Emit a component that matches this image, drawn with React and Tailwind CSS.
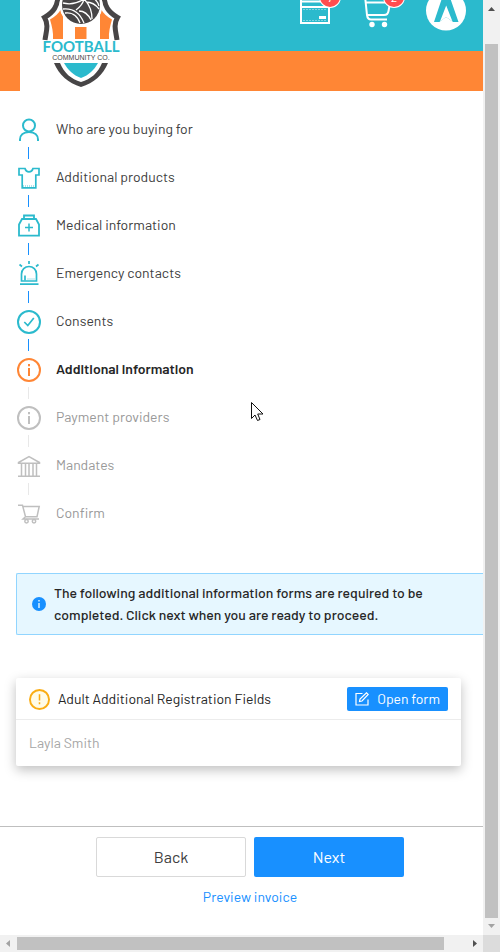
import React from 'react';

function PersonIcon() {
  return (
    <svg viewBox="0 0 24 24" className="size-6" fill="none" stroke="currentColor" strokeWidth="2">
      <circle cx="12" cy="7.500" r="6" />
      <path d="M3 23v-1.500c0-4 3-7.500 9-7.500s9 3.500 9 7.500V23" />
    </svg>
  );
}

function ShirtIcon() {
  return (
    <svg viewBox="0 0 24 24" className="size-6" fill="none" stroke="currentColor" strokeWidth="1.700">
      <path d="M2 2.500h6c.6 2.300 2.200 3.300 4 3.300s3.400-1 4-3.300h6v6.500h-3.200v12.800H5.200V9H2z" />
      <path d="M6 20h12" strokeWidth="0.800" strokeDasharray="1 1" />
    </svg>
  );
}

function MedicalIcon() {
  return (
    <svg viewBox="0 0 24 24" className="size-6" fill="none" stroke="currentColor" strokeWidth="1.800">
      <path d="M7 5V1.500h10V5" />
      <path d="M5 5h14l3 5.500v11.200H2V10.500z" />
      <path d="M12 9.500v8M8 13.500h8" strokeWidth="1.500" />
    </svg>
  );
}

function SirenIcon() {
  return (
    <svg viewBox="0 0 24 24" className="size-6 overflow-visible" fill="none" stroke="currentColor" strokeWidth="1.700">
      <path d="M12 -1v3M2.500 2.500l2.500 2M21.500 2.500l-2.500 2" />
      <path d="M4.500 19v-7a7.500 7.500 0 0 1 15 0v7z" />
      <path d="M8 18.500v-5M3 22.200h18.500" />
      <path d="M10.500 17h7" strokeWidth="0.800" strokeDasharray="1 1" />
    </svg>
  );
}

function CheckIcon() {
  return (
    <svg viewBox="0 0 24 24" className="size-6" fill="none" stroke="currentColor" strokeWidth="2">
      <circle cx="12" cy="12" r="11" />
      <path d="M7.300 12l3.500 3.500 6-7.500" strokeWidth="1.700" />
    </svg>
  );
}

function InfoIcon() {
  return (
    <svg viewBox="0 0 24 24" className="size-6" fill="none" stroke="currentColor" strokeWidth="2">
      <circle cx="12" cy="12" r="11" />
      <path d="M12 10v8M12 6v2.200" />
    </svg>
  );
}

function BankIcon() {
  return (
    <svg viewBox="0 0 24 24" className="size-6" fill="none" stroke="currentColor" strokeWidth="1.500">
      <path d="M1.500 9.200V8.500L12 2.700l10.500 5.800v.7zM1 22.200h22" />
      <path d="M4.500 10v12M8.500 10v12M12 10v12M16 10v12M19.500 10v12" />
    </svg>
  );
}

function CartIcon() {
  return (
    <svg viewBox="0 0 24 24" className="size-6" fill="none" stroke="currentColor" strokeWidth="1.500">
      <path d="M1 3.200h4.500l3 11.500h11.500L22.200 4.500H6M8.500 14.700L6 17h16" />
      <circle cx="9.500" cy="19.300" r="1.700" />
      <circle cx="17" cy="19.300" r="1.700" />
    </svg>
  );
}

const steps = [
  { label: 'Who are you buying for', Icon: PersonIcon, state: 'done' },
  { label: 'Additional products', Icon: ShirtIcon, state: 'done' },
  { label: 'Medical information', Icon: MedicalIcon, state: 'done' },
  { label: 'Emergency contacts', Icon: SirenIcon, state: 'done' },
  { label: 'Consents', Icon: CheckIcon, state: 'done' },
  { label: 'Additional information', Icon: InfoIcon, state: 'current' },
  { label: 'Payment providers', Icon: InfoIcon, state: 'waiting' },
  { label: 'Mandates', Icon: BankIcon, state: 'waiting' },
  { label: 'Confirm', Icon: CartIcon, state: 'waiting' },
];

const stepStyles = {
  done: { icon: 'text-[#2bbacd]', line: 'border-[#1890ff]', text: 'text-[#404040]' },
  current: { icon: 'text-[#ff8635]', line: 'border-[#e8e8e8]', text: 'font-semibold text-[#262626]' },
  waiting: { icon: 'text-[#bfbfbf]', line: 'border-[#e8e8e8]', text: 'text-[#999999]' },
};

function ClubLogo() {
  return (
    <svg viewBox="0 0 120 91" className="block w-full" role="img" aria-label="Football Community Co.">
      <path
        d="M38 -4C37.500 6 34 12 24.500 17.500 29 25 26 32 25 40M84 -4C84.500 6 88 12 97.500 17.500 93 25 96 32 97 40"
        fill="none"
        stroke="#474546"
        strokeWidth="5"
      />
      <path d="M41 9c-2 4-6 8-11 10.500 2 7 3.500 13 3 19.500h10V12z" fill="#ff8635" />
      <path d="M81 9c2 4 6 8 11 10.500-2 7-3.500 13-3 19.500H80V12z" fill="#ff8635" />
      <path d="M55 27h11.500v12H55z" fill="#ff8635" />
      <circle cx="61" cy="5" r="21.500" fill="#fff" />
      <circle cx="61" cy="5" r="19" fill="#474546" />
      <path
        d="M43 9c10-1 17 4 21 14M45 13c6-1 12 2 15 10M43 3c8 2 15 0 21-4M64 -1c-1 5-4 8-8 11M64 -1c5 5 8 11 8 20M59 11c5 0 9 3 12 9M66 2c5 0 10 3 13 7M70 -4c4 2 8 6 9 10"
        fill="none"
        stroke="#fff"
        strokeWidth="1.300"
      />
      <text x="61" y="52" textAnchor="middle" fontFamily="Lato, sans-serif" fontWeight="700" fontSize="15" fill="#2bbacd">
        FOOTBALL
      </text>
      <text x="61" y="60" textAnchor="middle" fontFamily="Liberation Sans, sans-serif" fontSize="7" fill="#474546">
        COMMUNITY CO.
      </text>
      <path d="M34 63h6c4 10 11 16 21 19 10-3 17-9 21-19h6C83 75 74 83 61 87 48 83 39 75 34 63z" fill="#474546" />
      <path d="M44 63h34c-4 7-9 12-17 15-8-3-13-8-17-15z" fill="#2bbacd" />
    </svg>
  );
}

function Badge({ children }) {
  return (
    <span className="absolute -top-[13px] left-5 flex h-5 w-5 items-center justify-center rounded-full bg-[#ff4d4f] text-xs text-white ring-1 ring-white">
      {children}
    </span>
  );
}

function Header() {
  return (
    <header className="relative overflow-hidden">
      <div className="flex h-[51px] items-start justify-end gap-[34px] bg-[#2bbacd] pr-[17px]">
        <button type="button" aria-label="Payments" className="relative">
          <svg viewBox="0 0 30 30" className="size-[30px]" fill="none" stroke="#fff" strokeWidth="2">
            <path d="M1 -4h28v27H1zM1 1.500h28M1 7h28" />
            <path d="M19 16h7v3h-7z" fill="#fff" stroke="none" />
            <path d="M3 9.500h24M3 20.500h24" strokeWidth="0.400" strokeDasharray="2 1" />
          </svg>
          <Badge>7</Badge>
        </button>
        <button type="button" aria-label="Basket" className="relative">
          <svg viewBox="0 0 28 30" className="h-[30px] w-7" fill="none" stroke="#fff" strokeWidth="2">
            <path d="M1 -4l2 19c.4 3 1.500 4.500 4 4.500h16M4 15h16c3 0 4-1 4.500-4L27 -2M2 2.500h20" />
            <circle cx="8" cy="24.500" r="2.700" fill="#fff" stroke="none" />
            <circle cx="20.500" cy="24.500" r="2.700" fill="#fff" stroke="none" />
          </svg>
          <Badge>2</Badge>
        </button>
        <button type="button" aria-label="Account">
          <svg viewBox="0 9 40 31" className="h-[31px] w-10">
            <circle cx="20" cy="19.500" r="20" fill="#fff" />
            <path d="M15.700 8h8.800l8 23h-5.300L20 26l-6.700 5H8z" fill="#2bbacd" />
            <path d="M20.200 14.500L26.500 30.500 20 26l-6 4.500z" fill="#fff" />
          </svg>
        </button>
      </div>
      <div className="h-10 bg-[#ff8635]" />
      <div className="absolute top-0 left-5 w-[120px] bg-white">
        <ClubLogo />
      </div>
    </header>
  );
}

function Steps() {
  return (
    <ol className="px-[17px] pt-[27px]">
      {steps.map(({ label, Icon, state }, i) => (
        <li key={label} className="flex h-12 gap-[15px]">
          <div className="flex w-6 flex-col gap-[5px]">
            <span className={stepStyles[state].icon}>
              <Icon />
            </span>
            {i < steps.length - 1 && <span className={`ml-[11px] h-3 border-l ${stepStyles[state].line}`} />}
          </div>
          <span className={`leading-[22px] ${stepStyles[state].text}`}>{label}</span>
        </li>
      ))}
    </ol>
  );
}

function FormCard() {
  return (
    <section className="mt-[43px] mr-[22px] ml-4 rounded-xs bg-white shadow-[0_4px_12px_rgba(0,0,0,0.25)]">
      <div className="flex items-center gap-2 border-b border-[#ececec] px-[13px] pt-[9px] pb-2">
        <svg viewBox="0 0 22 22" className="size-[21px] shrink-0" fill="#fffbe6" stroke="#faad14" strokeWidth="2">
          <circle cx="11" cy="11" r="10" />
          <path d="M11 5.500v6.500M11 14v2" strokeWidth="1.600" />
        </svg>
        <h2 className="flex-1 text-[#262626]">Adult Additional Registration Fields</h2>
        <button type="button" className="flex h-6 items-center gap-2 rounded-xs bg-[#1890ff] px-2 text-white">
          <svg viewBox="0 0 14 14" className="size-[14px]" fill="none" stroke="currentColor" strokeWidth="1.200">
            <path d="M7.500 1.500H1v11.500h12V7.500" />
            <path d="M4.500 9.500l.5-2.500L11.500 .8l1.700 1.700L7 9z" />
          </svg>
          Open form
        </button>
      </div>
      <p className="px-[13px] py-3 leading-[22px] text-[#a6a6a6]">Layla Smith</p>
    </section>
  );
}

export default function App() {
  return (
    <div className="grid min-h-screen grid-cols-[1fr_17px] grid-rows-[1fr_17px] bg-white font-['Barlow','Roboto',sans-serif] text-sm">
      <main className="relative flex min-w-0 flex-col">
        <Header />
        <Steps />
        <div className="mt-[23px] ml-4 flex items-center gap-2 rounded-l-xs border-y border-l border-[#91d5ff] bg-[#e6f7ff] py-2 pr-8 pl-[15px]">
          <svg viewBox="0 0 14 14" className="size-[14px] shrink-0">
            <circle cx="7" cy="7" r="7" fill="#1890ff" />
            <path d="M7 6v5M7 3v1.600" stroke="#e6f7ff" strokeWidth="1.400" />
          </svg>
          <p className="leading-[22px] font-medium text-[#262626]">
            The following additional information forms are required to be completed. Click next when you are ready to
            proceed.
          </p>
        </div>
        <FormCard />
        <footer className="mt-auto flex flex-col items-center border-t border-[#bfbfbf] pt-[10px] pb-[27px]">
          <div className="flex w-full justify-center gap-2 pl-[17px] text-base">
            <button type="button" className="h-10 w-[150px] rounded-xs border border-[#d9d9d9] bg-white text-[#404040]">
              Back
            </button>
            <button type="button" className="h-10 w-[150px] rounded-xs bg-[#1890ff] text-white">
              Next
            </button>
          </div>
          <a href="#invoice" className="mt-[9px] ml-[17px] leading-[22px] text-[#1890ff]">
            Preview invoice
          </a>
        </footer>
        <svg viewBox="0 0 13 20" className="absolute top-[402px] left-[251px] h-5 w-[13px]" aria-hidden="true">
          <path d="M.5 .5v16l3.500-3.500 2.500 5.500 2.500-1-2.300-5.500H12z" fill="#fff" stroke="#111" />
        </svg>
      </main>
      <div className="flex flex-col items-center bg-[#f1f1f1]" aria-hidden="true">
        <svg viewBox="0 0 17 44" className="h-11 w-[17px]">
          <path d="M5 11h7L8.500 7z" fill="#505050" />
        </svg>
        <div className="w-[13px] flex-1 bg-[#c1c1c1]" />
        <svg viewBox="0 0 17 17" className="size-[17px]">
          <path d="M5 6h7l-3.500 4z" fill="#a3a3a3" />
        </svg>
      </div>
      <div className="flex items-center bg-[#f1f1f1]" aria-hidden="true">
        <svg viewBox="0 0 17 17" className="size-[17px]">
          <path d="M10 5v7L6 8.500z" fill="#a3a3a3" />
        </svg>
        <div className="h-[13px] flex-1 bg-[#c1c1c1]" />
        <svg viewBox="0 0 39 17" className="h-[17px] w-[39px]">
          <path d="M29 5v7l4-3.500z" fill="#505050" />
        </svg>
      </div>
      <div className="bg-[#dcdcdc]" aria-hidden="true" />
    </div>
  );
}
